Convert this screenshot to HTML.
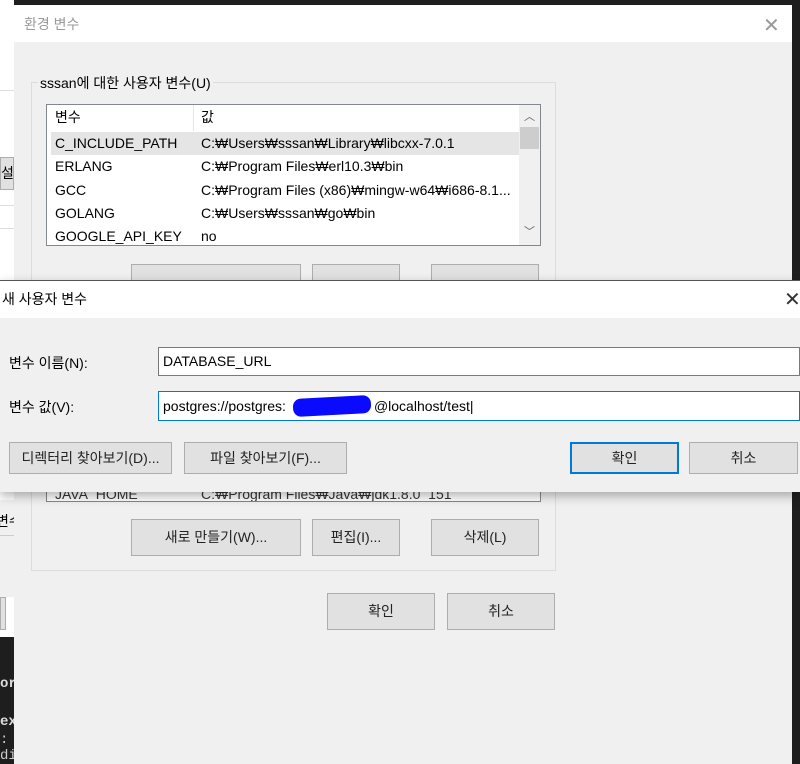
<!DOCTYPE html>
<html><head><meta charset="utf-8"><style>
*{box-sizing:border-box;margin:0;padding:0}
body{width:800px;height:764px;overflow:hidden;position:relative;background:#1e1e1e;font-family:"Liberation Sans","Noto Sans CJK KR",sans-serif;font-size:13px;color:#000}
.a{position:absolute;white-space:nowrap}
.btn{position:absolute;background:#e1e1e1;border:1px solid #adadad;text-align:center;font-size:14px;color:#222;white-space:nowrap}
.row{position:absolute;left:8px;height:23px;line-height:23px;font-size:14px;white-space:nowrap}
</style></head><body>
<div class="a" style="left:0;top:0;width:14px;height:637px;background:#fff;overflow:hidden">
<div class="a" style="left:0;top:90px;width:14px;height:1px;background:#ddd"></div>
<div class="a" style="left:0;top:157px;width:14px;height:33px;background:#e1e1e1;border:1px solid #adadad;font-size:14px;line-height:31px">설</div>
<div class="a" style="left:0;top:205px;width:14px;height:1px;background:#ddd"></div>
<div class="a" style="left:0;top:228px;width:14px;height:1px;background:#ddd"></div>
<div class="a" style="left:0;top:500px;width:14px;height:97px;background:#f0f0f0"></div>
<div class="a" style="left:-4px;top:511px;font-size:14px">변수</div>
<div class="a" style="left:0;top:535px;width:14px;height:1px;background:#ccc"></div>
<div class="a" style="left:0;top:597px;width:6px;height:33px;background:#e1e1e1;border:1px solid #adadad"></div>
</div>
<div class="a" style="left:0;top:676px;color:#ddd;font-family:'Liberation Mono',monospace;font-weight:bold;font-size:14px">ore</div>
<div class="a" style="left:0;top:714px;color:#ddd;font-family:'Liberation Mono',monospace;font-weight:bold;font-size:14px">ex</div>
<div class="a" style="left:0;top:732px;color:#ccc;font-family:'Liberation Mono',monospace;font-size:14px">: a</div>
<div class="a" style="left:0;top:748px;color:#ccc;font-family:'Liberation Mono',monospace;font-size:14px">di</div>
<div class="a" style="left:14px;top:5px;width:778px;height:759px;background:#f0f0f0">
 <div class="a" style="left:0;top:0;width:778px;height:37px;background:#fff"></div>
 <div class="a" style="left:10px;top:9px;font-size:14px;color:#999">환경 변수</div>
 <div class="a" style="left:749px;top:8px;font-size:20px;color:#999;font-weight:300">✕</div>
 <div class="a" style="left:17px;top:77px;width:525px;height:489px;border:1px solid #dcdcdc"></div>
 <div class="a" style="left:24px;top:68px;background:#f0f0f0;padding:0 2px;font-size:14px">sssan에 대한 사용자 변수(U)</div>
 <div class="a" style="left:32px;top:99px;width:495px;height:142px;background:#fff;border:1px solid #828790">
  <div class="a" style="left:146px;top:0;width:1px;height:26px;background:#e5e5e5"></div>
  <div class="row" style="top:1px">변수</div><div class="row" style="top:1px;left:154px">값</div>
  <div class="a" style="left:4px;top:27px;width:468px;height:23px;background:#e5e5e5"></div>
  <div class="row" style="top:27px">C_INCLUDE_PATH</div><div class="row" style="top:27px;left:154px">C:₩Users₩sssan₩Library₩libcxx-7.0.1</div>
  <div class="row" style="top:50px">ERLANG</div><div class="row" style="top:50px;left:154px">C:₩Program Files₩erl10.3₩bin</div>
  <div class="row" style="top:74px">GCC</div><div class="row" style="top:74px;left:154px">C:₩Program Files (x86)₩mingw-w64₩i686-8.1...</div>
  <div class="row" style="top:97px">GOLANG</div><div class="row" style="top:97px;left:154px">C:₩Users₩sssan₩go₩bin</div>
  <div class="row" style="top:120px">GOOGLE_API_KEY</div><div class="row" style="top:120px;left:154px">no</div>
  <div class="a" style="left:472px;top:0;width:21px;height:140px;background:#f0f0f0"></div>
  <div class="a" style="left:473px;top:22px;width:19px;height:22px;background:#cdcdcd"></div>
  <div class="a" style="left:477px;top:3px;font-size:11px;color:#606060">︿</div>
  <div class="a" style="left:477px;top:118px;font-size:11px;color:#606060">﹀</div>
 </div>
 <div class="btn" style="left:117px;top:259px;width:170px;height:37px"></div>
 <div class="btn" style="left:298px;top:259px;width:88px;height:37px"></div>
 <div class="btn" style="left:417px;top:259px;width:108px;height:37px"></div>
 <div class="a" style="left:32px;top:470px;width:495px;height:27px;background:#fff;border:1px solid #828790;border-top:none;font-size:14px;color:#333;overflow:hidden">
  <span class="a" style="left:8px;top:11px">JAVA_HOME</span><span class="a" style="left:154px;top:11px">C:₩Program Files₩Java₩jdk1.8.0_151</span></div>
 <div class="btn" style="left:117px;top:514px;width:170px;height:37px;line-height:35px">새로 만들기(W)...</div>
 <div class="btn" style="left:298px;top:514px;width:88px;height:37px;line-height:35px">편집(I)...</div>
 <div class="btn" style="left:417px;top:514px;width:108px;height:37px;line-height:35px">삭제(L)</div>
 <div class="btn" style="left:313px;top:588px;width:108px;height:37px;line-height:35px">확인</div>
 <div class="btn" style="left:433px;top:588px;width:108px;height:37px;line-height:35px">취소</div>
</div>
<div class="a" style="left:0;top:280px;width:800px;height:212px;background:#f0f0f0;border-top:1px solid #555;box-shadow:0 4px 10px rgba(0,0,0,.3)">
 <div class="a" style="left:0;top:0;width:800px;height:37px;background:#fff"></div>
 <div class="a" style="left:2px;top:8px;font-size:14px">새 사용자 변수</div>
 <div class="a" style="left:784px;top:6px;font-size:20px;color:#333;font-weight:300">✕</div>
 <div class="a" style="left:9px;top:72px;font-size:14px">변수 이름(N):</div>
 <div class="a" style="left:158px;top:66px;width:642px;height:29px;background:#fff;border:1px solid #7a7a7a;padding:5px 4px;font-size:14px">DATABASE_URL</div>
 <div class="a" style="left:9px;top:116px;font-size:14px">변수 값(V):</div>
 <div class="a" style="left:158px;top:110px;width:642px;height:30px;background:#fff;border:1px solid #0078d7;padding:6px 4px;font-size:14px">postgres://postgres:<span style="display:inline-block;width:88px"></span>@localhost/test|</div>
 <div class="a" style="left:293px;top:116px;width:78px;height:18px;background:#0a0aff;border-radius:8px;transform:rotate(-3deg)"></div>
 <div class="btn" style="left:9px;top:161px;width:163px;height:32px;line-height:30px">디렉터리 찾아보기(D)...</div>
 <div class="btn" style="left:184px;top:161px;width:163px;height:32px;line-height:30px">파일 찾아보기(F)...</div>
 <div class="btn" style="left:570px;top:161px;width:109px;height:32px;line-height:28px;border:2px solid #0078d7">확인</div>
 <div class="btn" style="left:689px;top:161px;width:109px;height:32px;line-height:30px">취소</div>
</div>
</body></html>
